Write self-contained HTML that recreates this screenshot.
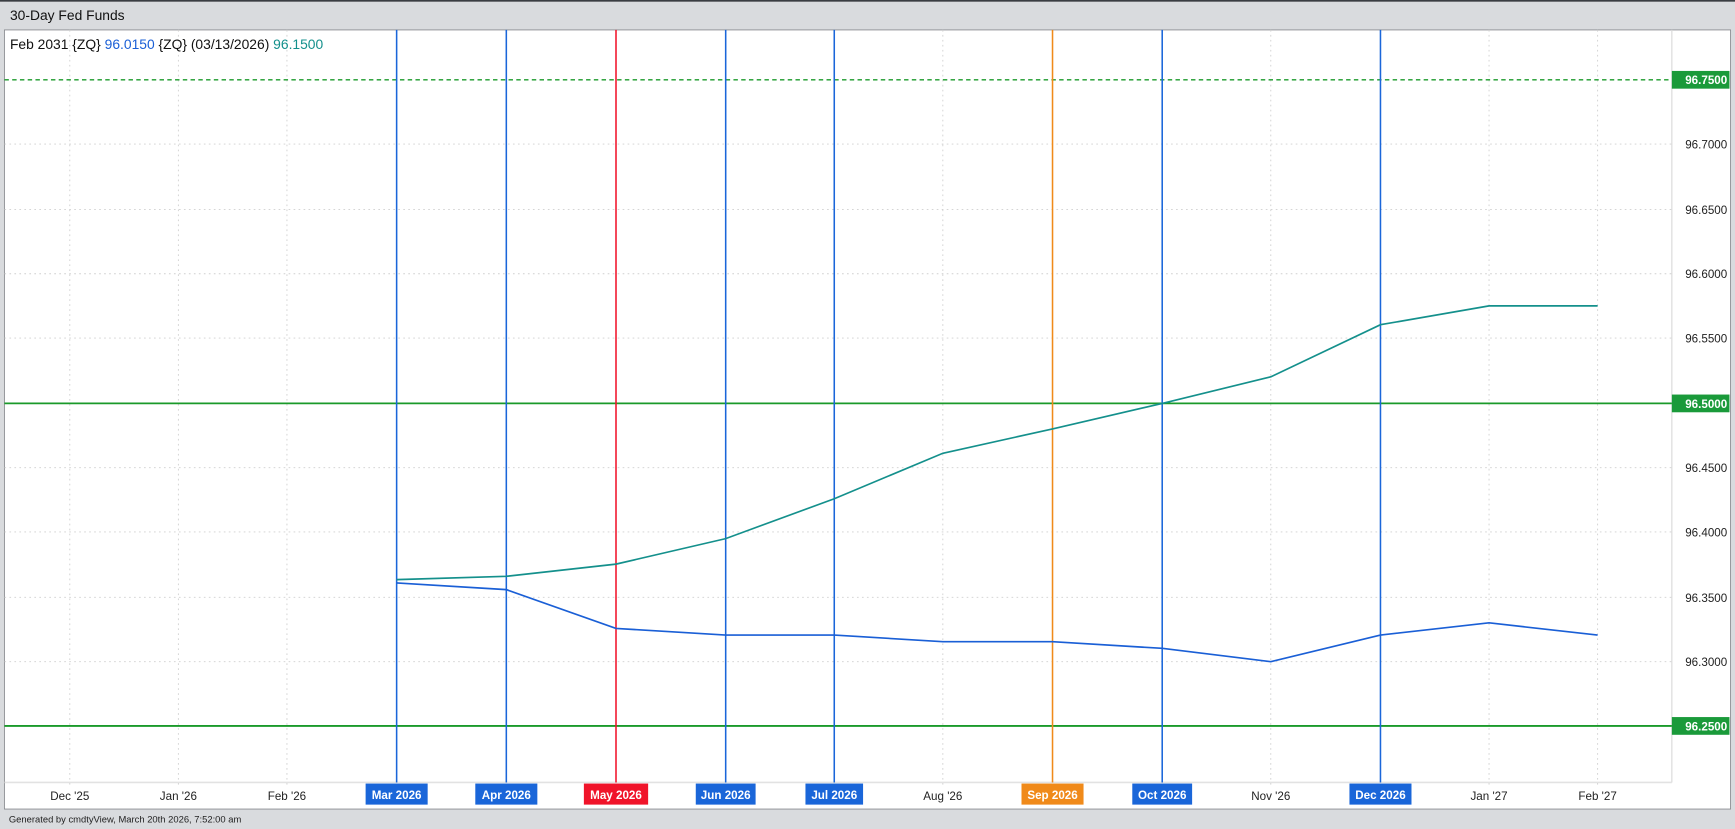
<!DOCTYPE html>
<html><head><meta charset="utf-8"><style>
html,body{margin:0;padding:0;background:#d9dbde;}
svg{display:block;}
text{font-family:"Liberation Sans",sans-serif;}
</style></head><body>
<svg width="1735" height="829" viewBox="0 0 1566 748" preserveAspectRatio="none" xmlns="http://www.w3.org/2000/svg">
<rect x="0" y="0" width="1566" height="748" fill="#d9dbde"/>
<rect x="0" y="0" width="1566" height="1.5" fill="#3a3d42"/>
<text x="9" y="18" font-size="12.5" fill="#111">30-Day Fed Funds</text>
<rect x="4" y="27" width="1558" height="703" fill="#fff" stroke="#8a8c90" stroke-width="0.8"/>
<line x1="1509" y1="27" x2="1509" y2="706" stroke="#d8d8d8" stroke-width="1"/>
<line x1="4" y1="706" x2="1509" y2="706" stroke="#e2e2e2" stroke-width="1.5"/>
<g stroke="#cfcfcf" stroke-width="0.8" stroke-dasharray="1.5,3">
<line x1="63" y1="27" x2="63" y2="710"/><line x1="161" y1="27" x2="161" y2="710"/><line x1="259" y1="27" x2="259" y2="710"/>
<line x1="851" y1="27" x2="851" y2="710"/><line x1="1147" y1="27" x2="1147" y2="710"/><line x1="1344" y1="27" x2="1344" y2="710"/><line x1="1442" y1="27" x2="1442" y2="710"/>
<line x1="4" y1="130" x2="1509" y2="130"/><line x1="4" y1="189" x2="1509" y2="189"/><line x1="4" y1="247" x2="1509" y2="247"/><line x1="4" y1="305" x2="1509" y2="305"/>
<line x1="4" y1="422" x2="1509" y2="422"/><line x1="4" y1="480" x2="1509" y2="480"/><line x1="4" y1="539" x2="1509" y2="539"/><line x1="4" y1="597" x2="1509" y2="597"/>
</g>
<line x1="4" y1="72" x2="1509" y2="72" stroke="#1a9a2a" stroke-width="1.3" stroke-dasharray="4,3"/>
<line x1="4" y1="364" x2="1509" y2="364" stroke="#1a9a2a" stroke-width="1.6"/>
<line x1="4" y1="655" x2="1509" y2="655" stroke="#1a9a2a" stroke-width="1.6"/>
<g stroke-width="1.4">
<line x1="358" y1="27" x2="358" y2="706" stroke="#1a66d9"/>
<line x1="457" y1="27" x2="457" y2="706" stroke="#1a66d9"/>
<line x1="556" y1="27" x2="556" y2="706" stroke="#f0142a"/>
<line x1="655" y1="27" x2="655" y2="706" stroke="#1a66d9"/>
<line x1="753" y1="27" x2="753" y2="706" stroke="#1a66d9"/>
<line x1="950" y1="27" x2="950" y2="706" stroke="#f08a1a"/>
<line x1="1049" y1="27" x2="1049" y2="706" stroke="#1a66d9"/>
<line x1="1246" y1="27" x2="1246" y2="706" stroke="#1a66d9"/>
</g>
<polyline fill="none" stroke="#14908c" stroke-width="1.5" points="358,523 457,520 556,509 655,486 753,450 851,409 950,387 1049,364 1147,340 1246,293 1344,276 1442,276"/>
<polyline fill="none" stroke="#1a5fd6" stroke-width="1.5" points="358,526 457,532 556,567 655,573 753,573 851,579 950,579 1049,585 1147,597 1246,573 1344,562 1442,573"/>
<text x="9" y="44" font-size="12.5" fill="#111">Feb 2031 {ZQ} <tspan fill="#1a5fd6">96.0150</tspan> {ZQ} (03/13/2026) <tspan fill="#14908c">96.1500</tspan></text>
<g font-size="10.5" fill="#222" text-anchor="end">
<text x="1559" y="134">96.7000</text><text x="1559" y="193">96.6500</text><text x="1559" y="251">96.6000</text><text x="1559" y="309">96.5500</text>
<text x="1559" y="426">96.4500</text><text x="1559" y="484">96.4000</text><text x="1559" y="543">96.3500</text><text x="1559" y="601">96.3000</text>
</g>
<g font-size="10.5" fill="#fff" font-weight="bold" text-anchor="end">
<rect x="1509" y="64" width="52" height="16" fill="#1a9a3a"/><text x="1559" y="76">96.7500</text>
<rect x="1509" y="356" width="52" height="16" fill="#1a9a3a"/><text x="1559" y="368">96.5000</text>
<rect x="1509" y="647" width="52" height="16" fill="#1a9a3a"/><text x="1559" y="659">96.2500</text>
</g>
<g font-size="10.5" fill="#222" text-anchor="middle">
<text x="63" y="722">Dec '25</text><text x="161" y="722">Jan '26</text><text x="259" y="722">Feb '26</text>
<text x="851" y="722">Aug '26</text><text x="1147" y="722">Nov '26</text><text x="1344" y="722">Jan '27</text><text x="1442" y="722">Feb '27</text>
</g>
<g font-size="10.5" fill="#fff" font-weight="bold" text-anchor="middle">
<rect x="330" y="707" width="56" height="19" fill="#1a66d9"/><text x="358" y="721">Mar 2026</text>
<rect x="429" y="707" width="56" height="19" fill="#1a66d9"/><text x="457" y="721">Apr 2026</text>
<rect x="527" y="707" width="58" height="19" fill="#f0142a"/><text x="556" y="721">May 2026</text>
<rect x="628" y="707" width="54" height="19" fill="#1a66d9"/><text x="655" y="721">Jun 2026</text>
<rect x="727" y="707" width="52" height="19" fill="#1a66d9"/><text x="753" y="721">Jul 2026</text>
<rect x="922" y="707" width="56" height="19" fill="#f08a1a"/><text x="950" y="721">Sep 2026</text>
<rect x="1022" y="707" width="54" height="19" fill="#1a66d9"/><text x="1049" y="721">Oct 2026</text>
<rect x="1218" y="707" width="56" height="19" fill="#1a66d9"/><text x="1246" y="721">Dec 2026</text>
</g>
<text x="8" y="742" font-size="8.5" fill="#222">Generated by cmdtyView, March 20th 2026, 7:52:00 am</text>
</svg>
</body></html>
